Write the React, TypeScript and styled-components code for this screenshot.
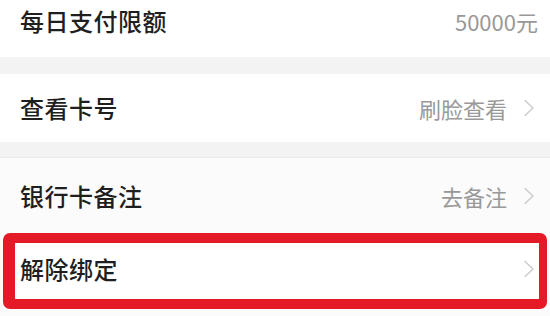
import styled, { createGlobalStyle } from 'styled-components';

const GlobalStyle = createGlobalStyle`
  html, body {
    margin: 0;
    padding: 0;
    background: #f4f4f4;
    font-family: "Noto Sans CJK SC", "Noto Sans", sans-serif;
  }
`;

const Chevron = () => (
  <svg width='12' height='18' viewBox='0 0 12 18' fill='none'>
    <path
      d='M2 1.5 L10 9 L2 16.5'
      stroke='#cdcdcd'
      strokeWidth='1.6'
      strokeLinecap='round'
      strokeLinejoin='round'
    />
  </svg>
);

export default function App() {
  return (
    <Page>
      <GlobalStyle />
      <Row $height={57} $padBottom={15} $padRight={12}>
        <Label>每日支付限额</Label>
        <Value>50000元</Value>
      </Row>
      <Gap $height={17} />
      <Row $height={68}>
        <Label>查看卡号</Label>
        <Right>
          <Value>刷脸查看</Value>
          <Chevron />
        </Right>
      </Row>
      <Gap $height={15} $line />
      <Row $height={75} $bg='#fbfbfb'>
        <Label>银行卡备注</Label>
        <Right>
          <Value>去备注</Value>
          <Chevron />
        </Right>
      </Row>
      <Highlight>
        <Row $height={56} $padLeft={5} $padRight={4} $padBottom={4}>
          <Label>解除绑定</Label>
          <Right>
            <Chevron />
          </Right>
        </Row>
      </Highlight>
      <Tail />
    </Page>
  );
}

const Page = styled.div`
  width: 550px;
  height: 316px;
  overflow: hidden;
  display: flex;
  flex-direction: column;
  background: #fbfbfb;
`;

const Row = styled.div<{
  $height: number;
  $padBottom?: number;
  $padLeft?: number;
  $padRight?: number;
  $bg?: string;
}>`
  height: ${(p) => p.$height}px;
  box-sizing: border-box;
  flex-shrink: 0;
  display: flex;
  align-items: center;
  justify-content: space-between;
  padding: 0 ${(p) => p.$padRight ?? 15}px ${(p) => p.$padBottom ?? 0}px
    ${(p) => p.$padLeft ?? 20}px;
  background: ${(p) => p.$bg ?? '#ffffff'};
`;

const Gap = styled.div<{ $height: number; $line?: boolean }>`
  height: ${(p) => p.$height}px;
  flex-shrink: 0;
  background: #f3f3f3;
  border-bottom: ${(p) => (p.$line ? '1px solid #ebebeb' : 'none')};
`;

const Label = styled.span`
  font-size: 24px;
  font-weight: 500;
  color: #1f1f1f;
  line-height: 1;
  letter-spacing: 0.5px;
`;

const Value = styled.span`
  font-size: 22px;
  font-weight: 400;
  color: #999999;
  line-height: 1;
`;

const Right = styled.div`
  display: flex;
  align-items: center;
  gap: 16px;
`;

const Highlight = styled.div`
  margin: 0 3px;
  flex-shrink: 0;
  border: 10px solid #e41b26;
  border-left-width: 12px;
  border-right-width: 8px;
  border-radius: 7px;
  overflow: hidden;
  background: #ffffff;
`;

const Tail = styled.div`
  flex: 1;
  background: #fbfbfb;
`;
